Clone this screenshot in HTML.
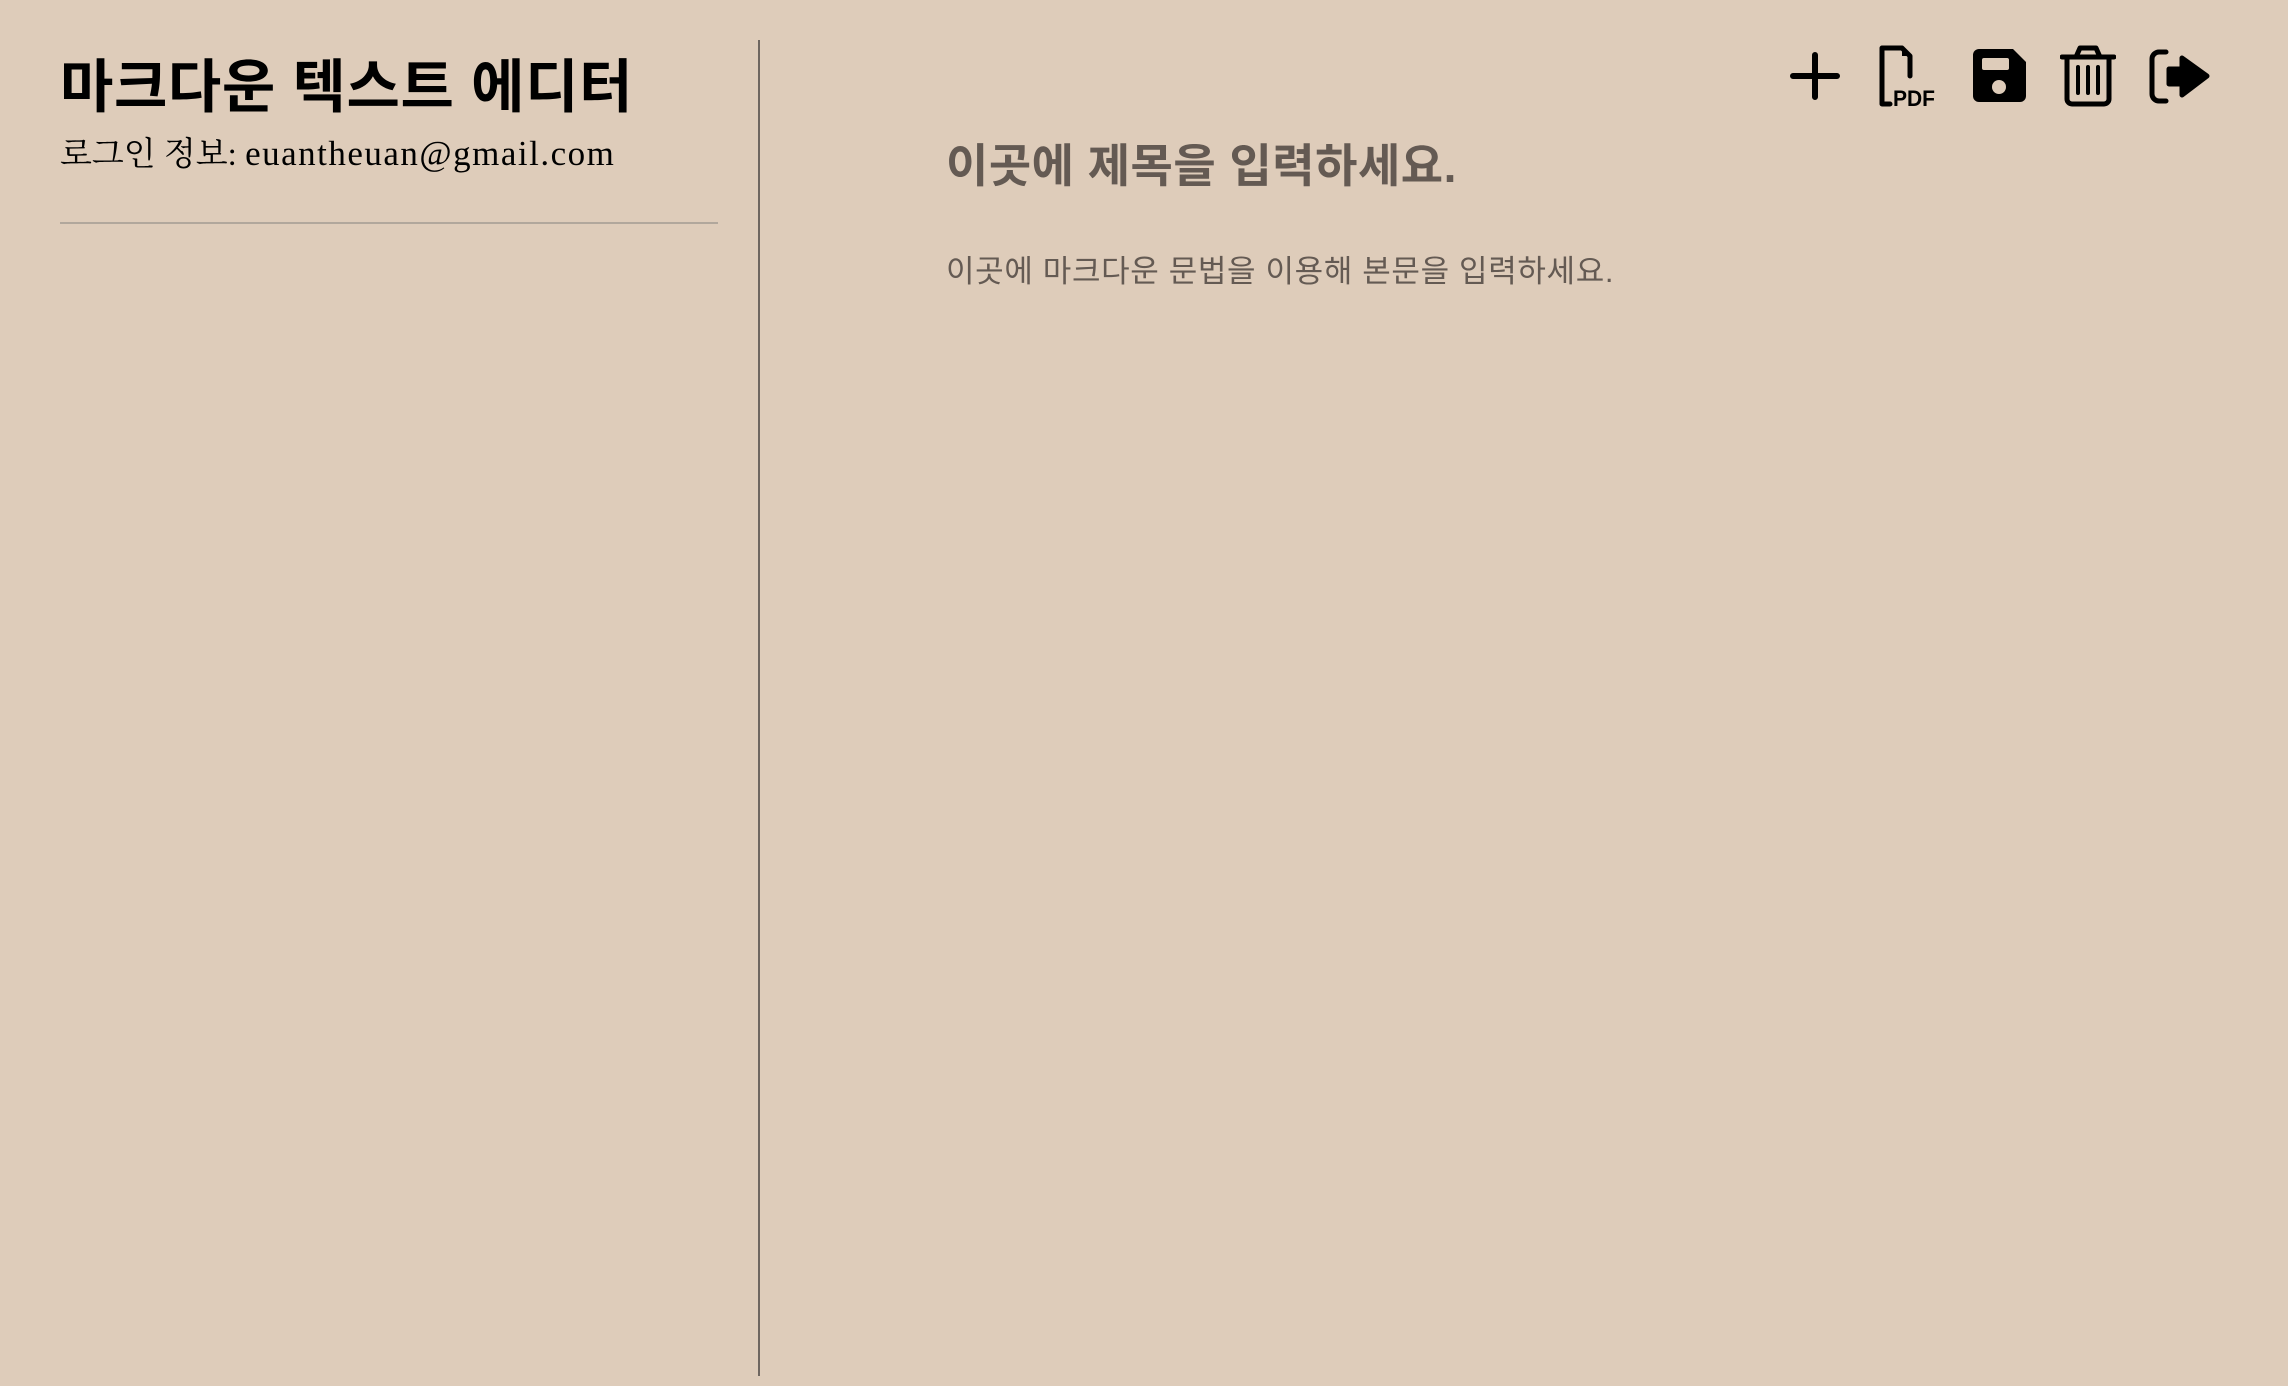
<!DOCTYPE html>
<html><head><meta charset="utf-8"><style>
html,body{margin:0;padding:0;width:2288px;height:1386px;background:#deccba;overflow:hidden}
body{position:relative;font-family:"Liberation Serif","Noto Serif CJK SC","Noto Sans CJK KR",serif}
.t{position:absolute;left:60px;top:40px;font-size:58px;font-weight:bold;color:#000;font-family:"Liberation Sans","Noto Sans CJK KR",sans-serif;white-space:nowrap;letter-spacing:0.6px}
.s{position:absolute;left:60px;top:128px;font-size:33px;color:#000;white-space:nowrap}
.s span{letter-spacing:1.5px;font-size:35px}
.hr{position:absolute;left:60px;top:222px;width:658px;height:2px;background:#b1a79c}
.vr{position:absolute;left:758px;top:40px;width:2px;height:1336px;background:#6e6660}
.h{position:absolute;left:946px;top:130px;font-size:46px;font-weight:bold;color:#645a53;font-family:"Liberation Sans","Noto Sans CJK KR",sans-serif;white-space:nowrap;letter-spacing:0.5px}
.b{position:absolute;left:946px;top:246px;font-size:31px;color:#645a53;font-family:"Liberation Sans","Noto Sans CJK KR",sans-serif;white-space:nowrap;letter-spacing:0.65px}
svg{position:absolute}
</style></head><body>
<div class="t">마크다운 텍스트 에디터</div>
<div class="s">로그인 정보: <span>euantheuan@gmail.com</span></div>
<div class="hr"></div>
<div class="vr"></div>
<div class="h">이곳에 제목을 입력하세요.</div>
<div class="b">이곳에 마크다운 문법을 이용해 본문을 입력하세요.</div>

<svg style="left:1790px;top:52px" width="50" height="50" viewBox="0 0 50 50"><path d="M25 3V45M3 24H47" stroke="#000" stroke-width="6" stroke-linecap="round"/></svg>

<svg style="left:1875px;top:44px" width="65" height="64" viewBox="0 0 65 64"><path d="M15 60H7V4H27L35 12V32" fill="none" stroke="#000" stroke-width="5" stroke-linejoin="round" stroke-linecap="round"/><path d="M27 4V12H35Z" fill="#000"/><text x="18" y="62" font-family="Liberation Sans,sans-serif" font-weight="bold" font-size="22" fill="#000" textLength="42" lengthAdjust="spacingAndGlyphs">PDF</text></svg>

<svg style="left:1973px;top:49px" width="54" height="54" viewBox="0 0 54 54"><path d="M6 0H40L53 13V47A6 6 0 0 1 47 53H6A6 6 0 0 1 0 47V6A6 6 0 0 1 6 0Z" fill="#000"/><rect x="9" y="9" width="27" height="12" rx="2" fill="#deccba"/><circle cx="26" cy="38" r="7" fill="#deccba"/></svg>

<svg style="left:2060px;top:45px" width="56" height="62" viewBox="0 0 56 62"><path d="M2 12H54" stroke="#000" stroke-width="5" stroke-linecap="round"/><path d="M16 12L20 3H36L40 12" fill="none" stroke="#000" stroke-width="5" stroke-linejoin="round"/><path d="M7 12V54A5 5 0 0 0 12 59H44A5 5 0 0 0 49 54V12" fill="none" stroke="#000" stroke-width="5"/><path d="M18 22V48M28 22V48M38 22V48" stroke="#000" stroke-width="4" stroke-linecap="round"/></svg>

<svg style="left:2149px;top:49px" width="62" height="56" viewBox="0 0 62 56"><path d="M17 3H10A7 7 0 0 0 3 10V45A7 7 0 0 0 10 52H17" fill="none" stroke="#000" stroke-width="5" stroke-linecap="round"/><path d="M20 20H33V9L58 27L33 46V35H20Z" fill="#000" stroke="#000" stroke-width="5" stroke-linejoin="round"/></svg>
</body></html>
